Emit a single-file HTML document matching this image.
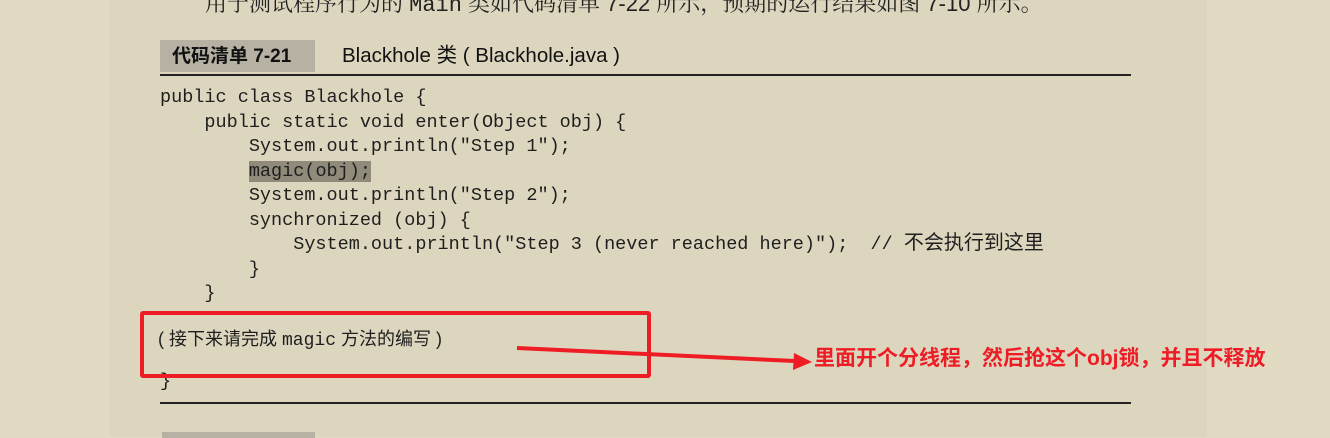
<!DOCTYPE html>
<html><head><meta charset="utf-8"><style>
body{margin:0;width:1330px;height:437px;background:#e2dbc4;position:relative;overflow:hidden;font-family:"Liberation Sans","Noto Sans CJK SC",sans-serif}
.paper{position:absolute;left:110px;top:0;width:1097px;height:437px;background:#ddd6bf}
.a{position:absolute;white-space:pre}
.code{font-family:"Liberation Mono","Noto Sans CJK SC",monospace;font-size:18.5px;color:#1e1e1e;left:160px}
.hl{background:#8f8a7a}
</style></head><body>
<div class="paper"></div>
<div class="a" style="left:205px;top:-13px;font-size:22px;color:#222;font-family:'Liberation Sans','Noto Serif CJK SC',serif">用于测试程序行为的 <span style="font-family:'Liberation Mono',monospace">Main</span> 类如代码清单 7-22 所示，预期的运行结果如图 7-10 所示。</div>
<div class="a" style="left:160px;top:40px;width:155px;height:32px;background:#b6b1a3"></div>
<div class="a" style="left:172px;top:44px;font-size:19px;font-weight:bold;color:#111;line-height:26px">代码清单 7-21</div>
<div class="a" style="left:342px;top:43px;font-size:20.5px;color:#111;line-height:26px">Blackhole 类 ( Blackhole.java )</div>
<div class="a" style="left:160px;top:74px;width:971px;height:2px;background:#222"></div>
<div class="a code" style="top:86px;line-height:24.5px">public class Blackhole {
    public static void enter(Object obj) {
        System.out.println("Step 1");
        <span class="hl">magic(obj);</span>
        System.out.println("Step 2");
        synchronized (obj) {
            System.out.println("Step 3 (never reached here)");  // <span style="font-size:20px">不会执行到这里</span>
        }
    }</div>
<div class="a" style="left:158px;top:325px;font-size:18px;color:#1e1e1e">( 接下来请完成 <span style="font-family:'Liberation Mono',monospace">magic</span> 方法的编写 )</div>
<div class="a code" style="top:371px">}</div>
<div class="a" style="left:160px;top:402px;width:971px;height:2px;background:#222"></div>
<div class="a" style="left:162px;top:432px;width:153px;height:6px;background:#b6b1a3"></div>
<div class="a" style="left:140px;top:311px;width:503px;height:59px;border:4px solid #ee1c25;border-radius:3px"></div>
<svg class="a" style="left:0;top:0" width="1330" height="437"><line x1="517" y1="348" x2="795" y2="361" stroke="#ee1c25" stroke-width="4"/><polygon points="812,362 794,353 793,370" fill="#ee1c25"/></svg>
<div class="a" style="left:814px;top:346px;font-size:21px;font-weight:bold;color:#ee1c25;line-height:26px">里面开个分线程，然后抢这个obj锁，并且不释放</div>
</body></html>
